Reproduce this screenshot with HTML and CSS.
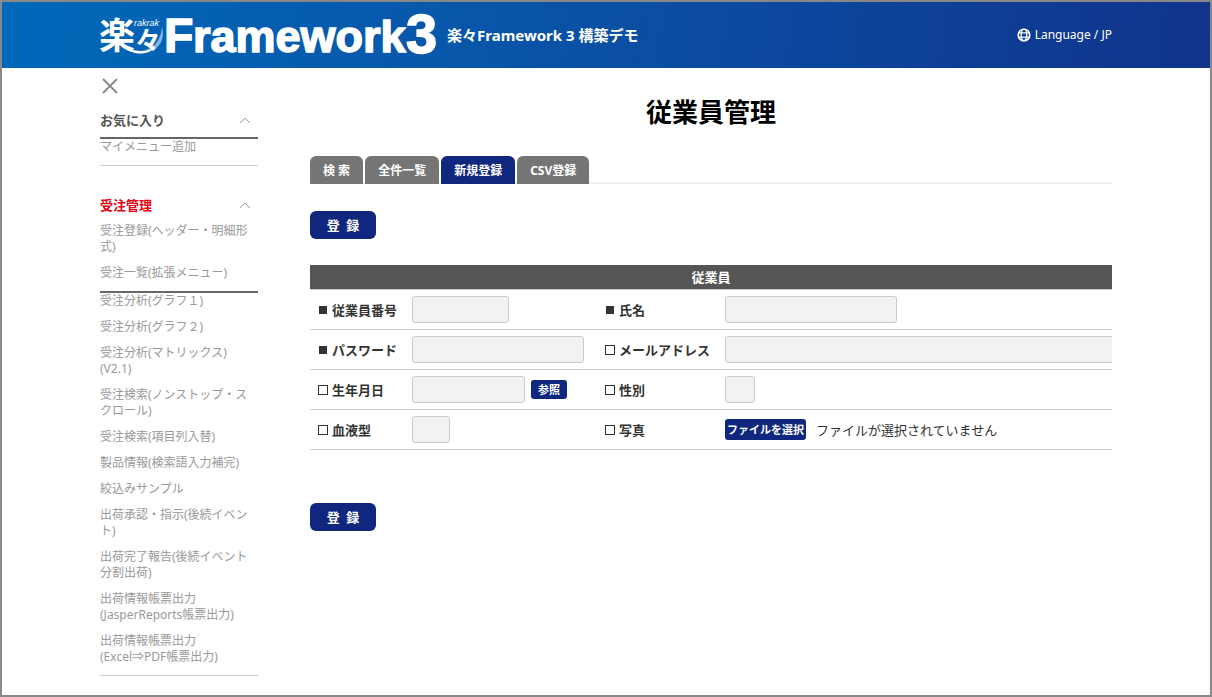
FILE: index.html
```html
<!DOCTYPE html>
<html lang="ja">
<head>
<meta charset="utf-8">
<title>従業員管理</title>
<link rel="stylesheet" href="styles.css">
</head>
<body>
<div class="page">
  <header class="header">
    <svg class="logo" width="340" height="44" viewBox="0 0 340 44" role="img" aria-label="楽々Framework3">
      <path d="M28 35C42 42 60 36 62 14C67 31 52 46 30 38Z" fill="#7fb4e4"/>
      <path d="M28 35C38 40 48 39 54 34C50 40 40 43 30 38Z" fill="#fff"/>
      <text class="logo-kanji" x="-1" y="36" font-size="36">楽</text>
      <text class="logo-kanji" x="35" y="37" font-size="26">々</text>
      <text class="logo-ruby" x="34" y="13">rakrak</text>
      <text class="logo-latin" x="64" y="39" font-size="48">F</text>
      <text class="logo-latin" x="93" y="39" font-size="45">ramework</text>
      <text class="logo-latin" x="306" y="40" font-size="56">3</text>
    </svg>
    <p class="site-name">楽々Framework 3 構築デモ</p>
    <a class="language" href="#">
      <svg width="14" height="14" viewBox="0 0 14 14" fill="none" stroke="currentColor" stroke-width="1.3" aria-hidden="true">
        <circle cx="7" cy="7" r="5.8" stroke-width="1.6"/>
        <ellipse cx="7" cy="7" rx="2.8" ry="5.8"/>
        <path d="M1.6 4.8H12.4M1.6 9.2H12.4"/>
      </svg>
      Language / JP
    </a>
  </header>

  <div class="body">
    <nav class="sidebar" aria-label="メニュー">
      <button class="close" type="button" aria-label="閉じる">
        <svg width="20" height="20" viewBox="0 0 20 20" fill="none" stroke="#888" stroke-width="1.8"><path d="M3 3L17 17M17 3L3 17"/></svg>
      </button>
      <section class="group">
        <h2 class="group-title ruled">お気に入り
          <svg class="chevron" width="12" height="8" viewBox="0 0 12 8"><path d="M1 7L6 2L11 7"/></svg>
        </h2>
        <ul class="menu">
          <li><a href="#">マイメニュー追加</a></li>
        </ul>
      </section>
      <section class="group">
        <h2 class="group-title current">受注管理
          <svg class="chevron" width="12" height="8" viewBox="0 0 12 8"><path d="M1 7L6 2L11 7"/></svg>
        </h2>
        <ul class="menu">
          <li><a href="#">受注登録(ヘッダー・明細形式)</a></li>
          <li class="divider"><a href="#">受注一覧(拡張メニュー)</a></li>
          <li><a href="#">受注分析(グラフ１)</a></li>
          <li><a href="#">受注分析(グラフ２)</a></li>
          <li><a href="#">受注分析(マトリックス)<br>(V2.1)</a></li>
          <li><a href="#">受注検索(ノンストップ・スクロール)</a></li>
          <li><a href="#">受注検索(項目列入替)</a></li>
          <li><a href="#">製品情報(検索語入力補完)</a></li>
          <li><a href="#">絞込みサンプル</a></li>
          <li><a href="#">出荷承認・指示(後続イベント)</a></li>
          <li><a href="#">出荷完了報告(後続イベント分割出荷)</a></li>
          <li><a href="#">出荷情報帳票出力<br>(JasperReports帳票出力)</a></li>
          <li><a href="#">出荷情報帳票出力<br>(Excel⇒PDF帳票出力)</a></li>
        </ul>
      </section>
    </nav>

    <main class="main">
      <h1 class="title">従業員管理</h1>
      <div class="tabs">
        <a class="tab" href="#">検 索</a>
        <a class="tab" href="#">全件一覧</a>
        <a class="tab active" href="#" aria-current="page">新規登録</a>
        <a class="tab" href="#">CSV登録</a>
      </div>
      <form class="form">
        <button class="submit" type="button">登&ensp;録</button>
        <table class="table">
          <colgroup><col class="col-label"><col class="col-field"><col class="col-label-wide"><col></colgroup>
          <thead>
            <tr><th class="caption" colspan="4">従業員</th></tr>
          </thead>
          <tbody>
            <tr>
              <th><label class="label required" for="emp-no">従業員番号</label></th>
              <td><input class="field w-code" id="emp-no" type="text"></td>
              <th><label class="label required" for="name">氏名</label></th>
              <td><input class="field w-text" id="name" type="text"></td>
            </tr>
            <tr>
              <th><label class="label required" for="password">パスワード</label></th>
              <td><input class="field w-text" id="password" type="password"></td>
              <th><label class="label" for="mail">メールアドレス</label></th>
              <td><input class="field w-long" id="mail" type="text"></td>
            </tr>
            <tr>
              <th><label class="label" for="birthday">生年月日</label></th>
              <td><div class="inline"><input class="field w-date" id="birthday" type="text"><button class="small-button" type="button">参照</button></div></td>
              <th><label class="label" for="gender">性別</label></th>
              <td><select class="field w-gender" id="gender"><option></option></select></td>
            </tr>
            <tr>
              <th><label class="label" for="blood">血液型</label></th>
              <td><select class="field w-blood" id="blood"><option></option></select></td>
              <th><span class="label">写真</span></th>
              <td>
                <div class="inline file">
                  <input class="file-input" id="photo" type="file">
                  <label class="small-button" for="photo">ファイルを選択</label>
                  <span>ファイルが選択されていません</span>
                </div>
              </td>
            </tr>
          </tbody>
        </table>
        <button class="submit" type="button">登&ensp;録</button>
      </form>
    </main>
  </div>
</div>
</body>
</html>
```
FILE: styles.css
```css
*, *::before { box-sizing: border-box; }

body {
  margin: 0;
  background: #fff;
  color: #333;
  font-family: "Noto Sans", "Noto Sans CJK JP", sans-serif;
  font-size: 13px;
  line-height: 20px;
}

h1, h2, p, ul { margin: 0; padding: 0; }
ul { list-style: none; }
a { color: inherit; text-decoration: none; }
button, input, select { font: inherit; }
button { border: 0; cursor: pointer; }

.page {
  min-height: 100vh;
  border: 2px solid #888;
}

/* Header */
.header {
  display: flex;
  align-items: center;
  height: 66px;
  padding: 0 98px;
  background: linear-gradient(100deg, #0069b9 0%, #0a50a5 50%, #11338b 100%);
  color: #fff;
}
.logo { flex: none; overflow: visible; }
.logo text { fill: #fff; stroke: #fff; }
.logo-kanji { font-family: "Noto Sans CJK JP", sans-serif; font-weight: 700; stroke-width: 0; }
.logo-ruby { font-family: "Liberation Sans", sans-serif; font-style: italic; font-size: 9px; stroke-width: 0; }
.logo-latin { font-family: "Liberation Sans", sans-serif; font-weight: 700; stroke-width: 1.5; }
.site-name { margin-left: 7px; font-size: 15px; font-weight: 700; white-space: nowrap; }
.language {
  display: flex;
  align-items: center;
  gap: 4px;
  margin-left: auto;
  font-size: 12px;
}

/* Columns */
.body {
  display: flex;
  gap: 52px;
  padding: 0 98px;
}
.sidebar { flex: 0 0 158px; padding: 8px 0 16px; }
.main { flex: 1; min-width: 0; padding-top: 24px; }

/* Sidebar */
.close {
  display: block;
  height: 20px;
  padding: 0;
  background: none;
}
.close svg { display: block; }
.group { margin-top: 29px; }
.close + .group { margin-top: 14px; }
.group-title {
  display: flex;
  align-items: center;
  justify-content: space-between;
  padding-right: 7px;
  color: #555;
  font-size: 13px;
  line-height: 20px;
}
.group-title.ruled { padding-bottom: 7px; border-bottom: 2px solid #666; }
.group-title.current { margin-bottom: 8px; color: #e60012; }
.chevron { fill: none; stroke: #999; }
.menu {
  border-bottom: 1px solid #ccc;
  color: #999;
  font-size: 12px;
  line-height: 16px;
}
.menu li { padding-bottom: 10px; }
.menu li.divider { border-bottom: 2px solid #666; }

/* Heading and tabs */
.title {
  color: #000;
  font-size: 26px;
  line-height: 40px;
  text-align: center;
}
.tabs {
  display: flex;
  gap: 2px;
  margin-top: 24px;
  border-bottom: 2px solid #eee;
}
.tab {
  margin-bottom: -2px;
  padding: 5px 13px 3px;
  border-radius: 6px 6px 0 0;
  background: #757575;
  color: #fff;
  font-size: 12px;
  font-weight: 700;
}
.tab.active { background: #10277f; }

/* Form */
.form { padding-top: 27px; }
.submit {
  display: block;
  width: 66px;
  height: 28px;
  padding: 0;
  border-radius: 6px;
  background: #10277f;
  color: #fff;
  font-weight: 700;
}
.table {
  width: 100%;
  margin: 26px 0 53px;
  border-collapse: separate;
  border-spacing: 0;
  table-layout: fixed;
}
.col-label { width: 102px; }
.col-field { width: 185px; }
.col-label-wide { width: 128px; }
.table th, .table td {
  height: 40px;
  padding: 0;
  border-bottom: 1px solid #ccc;
  text-align: left;
  vertical-align: middle;
  overflow: hidden;
}
.table .caption {
  height: 25px;
  background: #555;
  color: #fff;
  text-align: center;
}
.label {
  display: flex;
  align-items: center;
  gap: 4px;
  padding-left: 8px;
  white-space: nowrap;
}
.label::before {
  content: "";
  flex: none;
  width: 10px;
  height: 10px;
  border: 1px solid #333;
}
.label.required::before {
  border-color: #fff;
  background: #333;
}
.field {
  display: block;
  height: 27px;
  padding: 0 6px;
  border: 1px solid #ccc;
  border-radius: 3px;
  background: #f2f2f2;
  appearance: none;
}
.w-code { width: 97px; }
.w-text { width: 172px; }
.w-long { width: 480px; }
.w-date { width: 113px; }
.w-gender { width: 30px; }
.w-blood { width: 38px; }
.inline { display: flex; align-items: center; gap: 6px; }
.small-button {
  padding: 0 7px;
  border-radius: 3px;
  background: #10277f;
  color: #fff;
  font-size: 11px;
  font-weight: 700;
  line-height: 19px;
}
.file { position: relative; gap: 10px; }
.file .small-button { padding: 0 2px; line-height: 21px; }
.file-input {
  position: absolute;
  width: 1px;
  height: 1px;
  opacity: 0;
}
```
